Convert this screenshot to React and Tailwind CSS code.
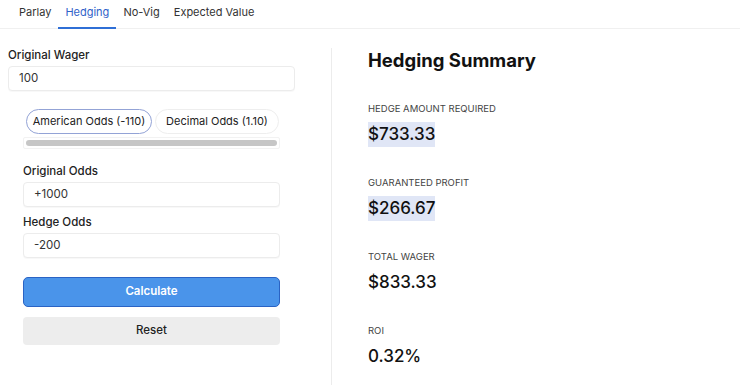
import React, { useState } from "react";

const tabs = ["Parlay", "Hedging", "No-Vig", "Expected Value"];

const results = [
  { label: "HEDGE AMOUNT REQUIRED", value: "$733.33", selected: true },
  { label: "GUARANTEED PROFIT", value: "$266.67", selected: true },
  { label: "TOTAL WAGER", value: "$833.33" },
  { label: "ROI", value: "0.32%" },
];

function Field({ label, value }) {
  return (
    <div>
      <label className="block h-[16px] text-[11.5px] leading-[16px] font-medium text-[#222]">{label}</label>
      <div className="mt-[3px] flex h-[25px] items-center rounded-[4px] border border-[#ececec] bg-white px-[10px] text-[11.5px] text-[#333] shadow-[0_1px_1px_rgba(0,0,0,0.03)]">
        {value}
      </div>
    </div>
  );
}

export default function App() {
  const [active, setActive] = useState("Hedging");
  const [mode, setMode] = useState("american");

  return (
    <div className="h-[385px] w-[740px] overflow-hidden bg-white font-['Inter',sans-serif] text-[#111]">
      <nav className="flex h-[29px] border-b border-[#f0f0f0] pl-[12px]">
        {tabs.map((t) => (
          <button
            key={t}
            onClick={() => setActive(t)}
            className={
              "flex h-[29px] items-start px-[7px] pt-[5px] text-[11px] leading-[14px] " +
              (active === t
                ? "border-b-2 border-[#2f6fd6] text-[#2f62c9]"
                : "border-b-2 border-transparent text-[#333]")
            }
          >
            {t}
          </button>
        ))}
      </nav>

      <div className="flex">
        <div className="w-[331px] pl-[8px] pr-[36px] pt-[18px]">
          <Field label="Original Wager" value="100" />

          <div className="px-[15px] pt-[18px]">
            <div className="flex gap-[3px] pl-[3px]">
              <button
                onClick={() => setMode("american")}
                className={
                  "h-[25px] w-[126px] flex-none whitespace-nowrap rounded-full border text-[11px] text-[#222] " +
                  (mode === "american" ? "border-[#93a3d6]" : "border-[#eee]")
                }
              >
                American Odds (-110)
              </button>
              <button
                onClick={() => setMode("decimal")}
                className={
                  "h-[25px] w-[124px] flex-none whitespace-nowrap rounded-full border text-[11px] text-[#222] " +
                  (mode === "decimal" ? "border-[#93a3d6]" : "border-[#eee]")
                }
              >
                Decimal Odds (1.10)
              </button>
            </div>
            <div className="mt-[3px] rounded-[2px] border border-[#f2f2f2] px-[2px] py-[2px]">
              <div className="h-[6px] rounded-full bg-[#c6c6c6]" />
            </div>

            <div className="mt-[14px]">
              <Field label="Original Odds" value="+1000" />
            </div>
            <div className="mt-[7px]">
              <Field label="Hedge Odds" value="-200" />
            </div>

            <button className="mt-[19px] flex h-[30px] w-full items-center justify-center rounded-[5px] border border-[#2a63c4] bg-[#4a94ea] text-[11.5px] font-semibold text-white">
              Calculate
            </button>
            <button className="mt-[10px] flex h-[28px] w-full items-center justify-center rounded-[4px] bg-[#ededed] text-[11.5px] font-medium text-[#222]">
              Reset
            </button>
          </div>
        </div>

        <div className="mt-[19px] h-[400px] flex-1 border-l border-[#ececec] pl-[36px]">
          <h2 className="text-[18.5px] leading-[24px] font-bold text-[#111]">Hedging Summary</h2>
          <div className="mt-[30px]">
            {results.map((r) => (
              <div key={r.label} className="mb-[29px]">
                <div className="h-[14px] text-[9.5px] leading-[14px] text-[#444]">{r.label}</div>
                <div className="mt-[6px] h-[25px]">
                  <span
                    className={
                      "inline-block h-[25px] text-[17px] leading-[25px] font-medium text-[#111] " +
                      (r.selected ? "bg-[#e0e6f6]" : "")
                    }
                  >
                    {r.value}
                  </span>
                </div>
              </div>
            ))}
          </div>
        </div>
      </div>
    </div>
  );
}
